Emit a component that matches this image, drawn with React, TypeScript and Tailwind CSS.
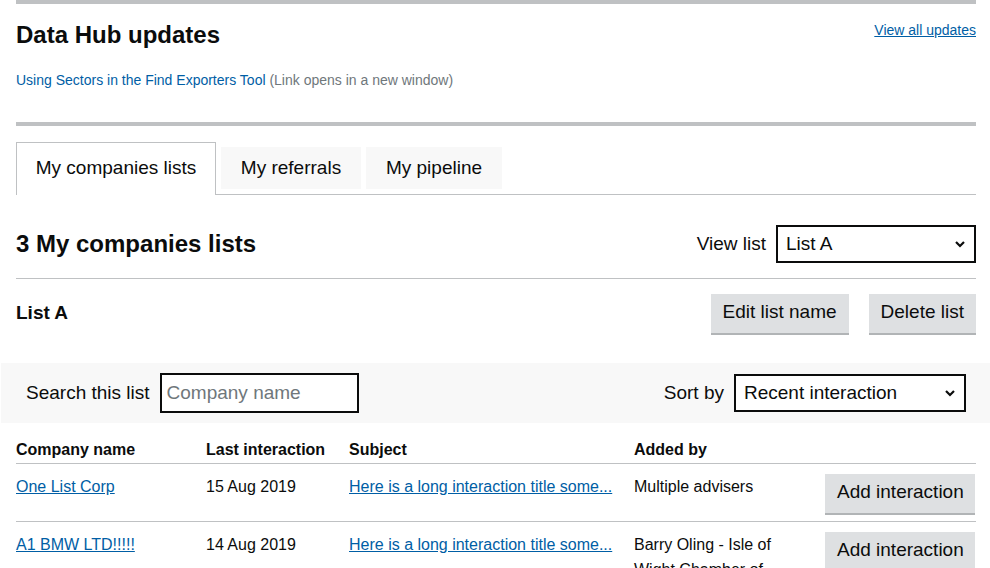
import type { ReactNode } from 'react'

const font = { fontFamily: '"Liberation Sans", Arial, sans-serif' }

function Chevron() {
  return (
    <svg width="12" height="8" viewBox="0 0 12 8" className="pointer-events-none absolute right-[10px] top-1/2 -translate-y-1/2">
      <path d="M2 2 L6 6 L10 2" fill="none" stroke="#0b0c0c" strokeWidth="2.2" />
    </svg>
  )
}

function Select({ value, className }: { value: string; className: string }) {
  return (
    <div className={`relative ${className}`}>
      <select
        defaultValue={value}
        className="h-full w-full appearance-none border-2 border-[#0b0c0c] bg-white pl-[8px] text-[19px] text-[#0b0c0c] outline-none"
      >
        <option value={value}>{value}</option>
      </select>
      <Chevron />
    </div>
  )
}

function GreyButton({ children, className = '' }: { children: ReactNode; className?: string }) {
  return (
    <button
      type="button"
      className={`h-[39px] whitespace-nowrap bg-[#dee0e2] px-[12px] pb-[2px] text-[19px] text-[#0b0c0c] shadow-[0_2px_0_#b1b4b6] ${className}`}
    >
      {children}
    </button>
  )
}

const rows = [
  {
    name: 'One List Corp',
    date: '15 Aug 2019',
    subject: 'Here is a long interaction title some...',
    by: 'Multiple advisers',
  },
  {
    name: 'A1 BMW LTD!!!!!',
    date: '14 Aug 2019',
    subject: 'Here is a long interaction title some...',
    by: 'Barry Oling - Isle of Wight Chamber of Commerce',
  },
]

export default function App() {
  return (
    <div className="h-[568px] w-[990px] overflow-hidden bg-white pl-4 pr-[14px] text-[#0b0c0c]" style={font}>
      <div className="h-[4px] bg-[#bfc1c3]" />
      <div className="flex items-start justify-between pt-[16px]">
        <h2 className="text-[24px] font-bold leading-[30px]">Data Hub updates</h2>
        <a href="#" className="mt-[2px] text-[14px] leading-[16px] text-[#005ea5] underline">
          View all updates
        </a>
      </div>
      <p className="mt-[22px] text-[14px] leading-[16px] text-[#6f777b]">
        <a href="#" className="text-[#005ea5]">
          Using Sectors in the Find Exporters Tool
        </a>{' '}
        (Link opens in a new window)
      </p>
      <div className="mt-[34px] h-[4px] bg-[#bfc1c3]" />

      <div className="mt-[16px] flex items-end border-b border-[#bfc1c3]">
        <div className="-mb-px flex h-[53px] w-[200px] items-center justify-center border border-b-0 border-[#bfc1c3] bg-white pb-[2px] text-[19px]">
          My companies lists
        </div>
        <div className="mb-[5px] ml-[5px] flex h-[42px] w-[140px] items-center justify-center bg-[#f8f8f8] text-[19px]">
          My referrals
        </div>
        <div className="mb-[5px] ml-[5px] flex h-[42px] w-[136px] items-center justify-center bg-[#f8f8f8] text-[19px]">
          My pipeline
        </div>
      </div>

      <div className="mt-[30px] flex h-[38px] items-center justify-between">
        <h2 className="text-[24px] font-bold">3 My companies lists</h2>
        <div className="flex items-center gap-[10px]">
          <span className="text-[19px]">View list</span>
          <Select value="List A" className="h-[38px] w-[200px]" />
        </div>
      </div>
      <div className="mt-[15px] h-px bg-[#bfc1c3]" />

      <div className="mt-[15px] flex items-center justify-between">
        <h3 className="text-[19px] font-bold">List A</h3>
        <div className="flex gap-[20px]">
          <GreyButton>Edit list name</GreyButton>
          <GreyButton>Delete list</GreyButton>
        </div>
      </div>

      <div className="-ml-[15px] -mr-[14px] mt-[30px] flex h-[60px] items-center justify-between bg-[#f8f8f8] pl-[25px] pr-[24px]">
        <div className="flex items-center gap-[10px]">
          <label className="text-[19px]">Search this list</label>
          <input
            placeholder="Company name"
            className="h-[40px] w-[199px] border-2 border-[#0b0c0c] bg-white px-[5px] text-[19px] outline-none placeholder:text-[#6f777b]"
          />
        </div>
        <div className="flex items-center gap-[10px]">
          <span className="text-[19px]">Sort by</span>
          <Select value="Recent interaction" className="h-[38px] w-[232px]" />
        </div>
      </div>

      <table className="mt-[17px] w-full border-collapse text-[16px]">
        <thead>
          <tr className="border-b border-[#bfc1c3] text-left">
            <th className="w-[190px] pb-[3px] font-bold leading-[20px]">Company name</th>
            <th className="w-[143px] pb-[3px] font-bold leading-[20px]">Last interaction</th>
            <th className="w-[285px] pb-[3px] font-bold leading-[20px]">Subject</th>
            <th className="pb-[3px] font-bold leading-[20px]">Added by</th>
            <th className="w-[152px]" />
          </tr>
        </thead>
        <tbody>
          {rows.map((r) => (
            <tr key={r.name} className="border-b border-[#bfc1c3] align-top">
              <td className="pt-[13px] leading-[20px]">
                <a href="#" className="text-[#005ea5] underline">
                  {r.name}
                </a>
              </td>
              <td className="pt-[13px] leading-[20px]">{r.date}</td>
              <td className="pt-[13px] leading-[20px]">
                <a href="#" className="text-[#005ea5] underline">
                  {r.subject}
                </a>
              </td>
              <td className="pr-[30px] pt-[13px] leading-[25px]">
                <div className="-mt-[3px]">{r.by}</div>
              </td>
              <td className="pb-[8px] pt-[10px] pr-px text-right">
                <GreyButton className="w-[150px] px-0">Add interaction</GreyButton>
              </td>
            </tr>
          ))}
        </tbody>
      </table>
    </div>
  )
}
